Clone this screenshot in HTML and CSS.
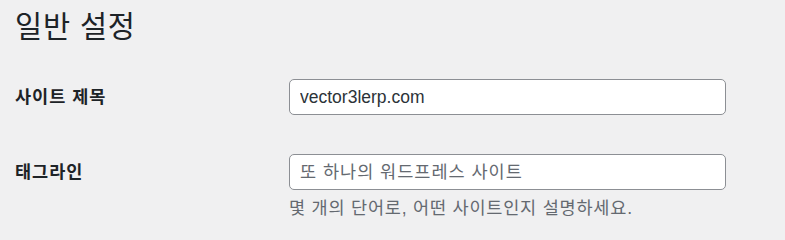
FILE: index.html
```html
<!DOCTYPE html>
<html lang="ko">
<head>
<meta charset="utf-8">
<title>일반 설정</title>
<link rel="stylesheet" href="styles.css">
</head>
<body>
<div class="wrap">
  <h1 class="title">일반 설정</h1>
  <div class="form">
    <div class="row">
      <label class="label" for="blogname">사이트 제목</label>
      <div class="field">
        <input class="input" id="blogname" type="text" value="vector3lerp.com">
      </div>
    </div>
    <div class="row">
      <label class="label" for="blogdescription">태그라인</label>
      <div class="field">
        <input class="input" id="blogdescription" type="text" placeholder="또 하나의 워드프레스 사이트">
        <p class="description">몇 개의 단어로, 어떤 사이트인지 설명하세요.</p>
      </div>
    </div>
  </div>
</div>
</body>
</html>
```

FILE: styles.css
```css
html, body {
  margin: 0;
  padding: 0;
  background: #f0f0f1;
}
body {
  font-family: "Liberation Sans", "Noto Sans CJK KR", sans-serif;
  color: #1d2327;
}
.wrap {
  padding: 8px 0 0 15px;
}
.title {
  margin: 0;
  font-size: 29.5px;
  font-weight: 400;
  line-height: 37px;
  letter-spacing: 0.8px;
  color: #1d2327;
}
.form {
  display: flex;
  flex-direction: column;
  gap: 39px;
  margin-top: 34px;
}
.row {
  display: grid;
  grid-template-columns: 274px 437px;
  align-items: start;
}
.label {
  font-size: 17.5px;
  font-weight: 700;
  line-height: 36px;
  letter-spacing: 1px;
  color: #1d2327;
}
.field {
  display: flex;
  flex-direction: column;
}
.input {
  box-sizing: border-box;
  width: 437px;
  height: 36px;
  margin: 0;
  padding: 0 10px;
  border: 1px solid #8c8f94;
  border-radius: 5px;
  background: #fff;
  font-family: "Liberation Sans", "Noto Sans CJK KR", sans-serif;
  font-size: 17.5px;
  color: #2c3338;
  outline: none;
}
.input::placeholder {
  color: #646970;
  letter-spacing: 1px;
  opacity: 1;
}
.description {
  margin: 6px 0 0;
  font-size: 17.5px;
  line-height: 24px;
  letter-spacing: 0.8px;
  color: #646970;
}
```
